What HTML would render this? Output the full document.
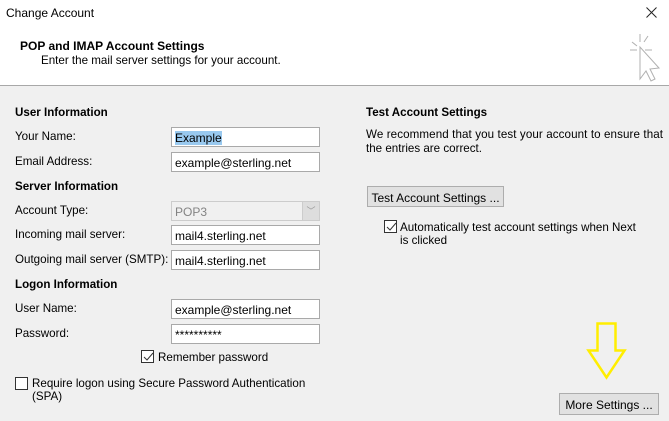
<!DOCTYPE html>
<html><head><style>
*{margin:0;padding:0;box-sizing:border-box}
body{width:669px;height:421px;background:#f0f0f0;font-family:"Liberation Sans",sans-serif;font-size:11.6px;color:#000;position:relative;overflow:hidden}
.a{position:absolute;white-space:nowrap}
.b{font-weight:bold}
.in{position:absolute;left:171px;width:149px;height:20px;background:#fff;border:1px solid #a9a9a9;padding:3px 0 0 3px;font-size:12px}
.btn{position:absolute;background:#e1e1e1;border:1px solid #adadad;font-size:12px;text-align:center;padding-top:4px}
.cb{position:absolute;width:13px;height:13px;border:1px solid #333;background:#fff}
</style></head><body>
<div style="position:absolute;left:0;top:0;width:669px;height:86px;background:#fff;border-bottom:1px solid #a8a8a8"></div>
<div class="a" style="left:6px;top:6px;font-size:12px">Change Account</div>
<svg class="a" style="left:646px;top:7px" width="11" height="11"><path d="M0.5 0.5l10 10M10.5 0.5l-10 10" stroke="#222" stroke-width="1"/></svg>
<div class="a b" style="left:20px;top:39px;font-size:12px">POP and IMAP Account Settings</div>
<div class="a" style="left:41px;top:54px">Enter the mail server settings for your account.</div>
<svg class="a" style="left:628px;top:32px" width="36" height="50" viewBox="0 0 36 50" fill="none" stroke="#b0b0b0" stroke-width="1">
<path d="M12 2v8M4 10l5 4M2 18h7M20 4l-4 6M24 18h-7M12 15v32l6-8 5 10 4-2-5-10 9-1z"/></svg>
<div class="a b" style="left:15px;top:106px">User Information</div>
<div class="a" style="left:15px;top:130px">Your Name:</div>
<div class="in" style="top:127px"><span style="background:#99c9ef">Example</span></div>
<div class="a" style="left:15px;top:155px">Email Address:</div>
<div class="in" style="top:152px">example@sterling.net</div>
<div class="a b" style="left:15px;top:180px">Server Information</div>
<div class="a" style="left:15px;top:204px">Account Type:</div>
<div class="in" style="top:201px;background:#f0f0f0;border-color:#ccc;color:#838383">POP3<div style="position:absolute;right:0;top:0;width:17px;height:18px;background:#ddd;border-left:1px solid #ccc;color:#999;font-size:9px;text-align:center;padding-top:2px">﹀</div></div>
<div class="a" style="left:15px;top:228px">Incoming mail server:</div>
<div class="in" style="top:225px">mail4.sterling.net</div>
<div class="a" style="left:15px;top:253px">Outgoing mail server (SMTP):</div>
<div class="in" style="top:250px">mail4.sterling.net</div>
<div class="a b" style="left:15px;top:278px">Logon Information</div>
<div class="a" style="left:15px;top:302px">User Name:</div>
<div class="in" style="top:299px">example@sterling.net</div>
<div class="a" style="left:15px;top:327px">Password:</div>
<div class="in" style="top:324px">**********</div>
<div class="cb" style="left:141px;top:350px"></div>
<svg class="a" style="left:142px;top:351px" width="12" height="12"><path d="M2 6l3 3 6-7" stroke="#333" fill="none"/></svg>
<div class="a" style="left:158px;top:351px">Remember password</div>
<div class="cb" style="left:15px;top:377px"></div>
<div class="a" style="left:32px;top:377px">Require logon using Secure Password Authentication</div>
<div class="a" style="left:32px;top:390px">(SPA)</div>
<div class="a b" style="left:366px;top:106px">Test Account Settings</div>
<div class="a" style="left:366px;top:128px;letter-spacing:0.1px">We recommend that you test your account to ensure that</div>
<div class="a" style="left:366px;top:142px">the entries are correct.</div>
<div class="btn" style="left:367px;top:186px;width:137px;height:21px">Test Account Settings ...</div>
<div class="cb" style="left:384px;top:220px"></div>
<svg class="a" style="left:385px;top:221px" width="12" height="12"><path d="M2 6l3 3 6-7" stroke="#333" fill="none"/></svg>
<div class="a" style="left:400px;top:221px">Automatically test account settings when Next</div>
<div class="a" style="left:400px;top:234px">is clicked</div>
<svg class="a" style="left:585px;top:320px" width="42" height="62"><path d="M12.5 3.5h18v27h9l-18 27-18-27h9z" fill="none" stroke="#ffee00" stroke-width="2.5"/></svg>
<div class="btn" style="left:559px;top:393px;width:100px;height:22px">More Settings ...</div>
</body></html>
